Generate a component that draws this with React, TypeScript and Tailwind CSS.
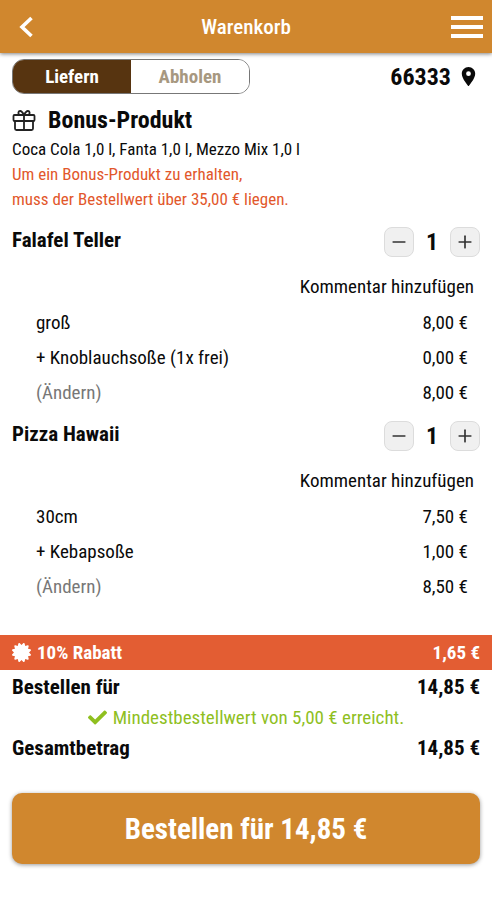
import { useState } from "react";
import { FaCertificate } from "react-icons/fa6";
import { FaCheck } from "react-icons/fa";
import { MdLocationOn } from "react-icons/md";
import { Minus, Plus } from "lucide-react";

type Option = { label: string; price: string };
type Item = { name: string; options: Option[]; total: string };

const items: Item[] = [
  {
    name: "Falafel Teller",
    options: [
      { label: "groß", price: "8,00 €" },
      { label: "+ Knoblauchsoße (1x frei)", price: "0,00 €" },
    ],
    total: "8,00 €",
  },
  {
    name: "Pizza Hawaii",
    options: [
      { label: "30cm", price: "7,50 €" },
      { label: "+ Kebapsoße", price: "1,00 €" },
    ],
    total: "8,50 €",
  },
];

function GiftIcon() {
  return (
    <svg viewBox="0 0 24 22" className="h-[22px] w-6" fill="none" stroke="#222" strokeWidth="1.8" strokeLinejoin="round" aria-hidden="true">
      <rect x="1.500" y="6" width="21" height="6" rx="1" />
      <path d="M3 12v7.500a1.500 1.500 0 0 0 1.500 1.500h15a1.500 1.500 0 0 0 1.500-1.500V12M12 6v15" />
      <path d="M12 6C10.500 3 9.500 1.800 8 2 5.800 2.400 6 5 7.500 6M12 6c1.500-3 2.500-4.200 4-4 2.200.4 2 3 .5 4" />
    </svg>
  );
}

function Stepper() {
  const [count, setCount] = useState(1);
  const button =
    "flex h-[30px] w-[30px] items-center justify-center rounded-lg border border-[#dcdcdc] bg-[#f0f0f0] text-[#333]";
  return (
    <div className="flex items-center">
      <button type="button" aria-label="Weniger" className={button} onClick={() => setCount(Math.max(0, count - 1))}>
        <Minus size={20} strokeWidth={2} />
      </button>
      <span className="w-9 text-center text-2xl leading-6 font-bold">{count}</span>
      <button type="button" aria-label="Mehr" className={button} onClick={() => setCount(count + 1)}>
        <Plus size={20} strokeWidth={2} />
      </button>
    </div>
  );
}

function CartItem({ item }: { item: Item }) {
  return (
    <section className="pt-1 pb-[7px]">
      <div className="flex h-[30px] justify-between px-3">
        <h2 className="text-[21px] leading-[26px] font-bold">{item.name}</h2>
        <Stepper />
      </div>
      <div className="mt-3 flex h-9 items-center justify-end pr-[18px]">
        <button type="button">Kommentar hinzufügen</button>
      </div>
      <table className="w-full">
        <tbody>
          {item.options.map((option) => (
            <tr key={option.label} className="h-[35px]">
              <td className="p-0 pl-9">{option.label}</td>
              <td className="p-0 pr-6 text-right">{option.price}</td>
            </tr>
          ))}
          <tr className="h-[35px]">
            <td className="p-0 pl-9 text-[#777]">
              <button type="button">(Ändern)</button>
            </td>
            <td className="p-0 pr-6 text-right">{item.total}</td>
          </tr>
        </tbody>
      </table>
    </section>
  );
}

export default function App() {
  const [mode, setMode] = useState("liefern");
  const tab = "flex-1 text-center";
  const active = "bg-[#573410] text-white";
  const idle = "bg-white text-[#a79880]";
  return (
    <div className="min-h-screen bg-white font-['Roboto_Condensed',Roboto,sans-serif] text-[19px] leading-6 text-[#0a0a0a]">
      <header className="grid h-[53px] grid-cols-[1fr_auto_1fr] items-center bg-[#d0872e] pr-2 pl-4 text-white shadow-[0_1px_4px_rgba(0,0,0,0.5)]">
        <button type="button" aria-label="Zurück" className="justify-self-start">
          <svg viewBox="0 0 20 24" className="h-6 w-5" fill="none" stroke="currentColor" strokeWidth="3.600" aria-hidden="true">
            <path d="M15.500 3 6 12l9.500 9" />
          </svg>
        </button>
        <h1 className="pr-2 text-[21px] font-medium">Warenkorb</h1>
        <button type="button" aria-label="Menü" className="justify-self-end">
          <svg viewBox="0 0 34 24" className="h-6 w-[34px]" fill="currentColor" aria-hidden="true">
            <path d="M1 1h32v4H1zM1 10h32v4H1zM1 19h32v4H1z" />
          </svg>
        </button>
      </header>

      <main>
        <div className="flex items-center justify-between px-3 pt-[6px]">
          <div className="flex h-[35px] w-[238px] overflow-hidden rounded-xl border border-[#777] text-[19px] font-bold">
            <button type="button" className={`${tab} ${mode === "liefern" ? active : idle}`} onClick={() => setMode("liefern")}>
              Liefern
            </button>
            <button type="button" className={`${tab} ${mode === "abholen" ? active : idle}`} onClick={() => setMode("abholen")}>
              Abholen
            </button>
          </div>
          <button type="button" className="flex items-center gap-[6px] text-2xl leading-6 font-bold">
            66333
            <MdLocationOn size={23} />
          </button>
        </div>

        <section className="px-3 pt-2 pb-[11px]">
          <h2 className="flex h-[35px] items-center gap-3 text-2xl leading-6 font-bold">
            <GiftIcon />
            Bonus-Produkt
          </h2>
          <p className="text-[17px] leading-[25px]">Coca Cola 1,0 l, Fanta 1,0 l, Mezzo Mix 1,0 l</p>
          <p className="text-[17px] leading-[25px] text-[#e2572b]">
            Um ein Bonus-Produkt zu erhalten,
            <br />
            muss der Bestellwert über 35,00 € liegen.
          </p>
        </section>

        {items.map((item) => (
          <CartItem key={item.name} item={item} />
        ))}

        <section className="mt-6 text-[21px] font-bold">
          <div className="flex h-[35px] items-center justify-between bg-[#e35d33] px-3 text-[19px] text-white">
            <span className="flex items-center gap-[6px]">
              <FaCertificate size={19} />
              10% Rabatt
            </span>
            <span>1,65 €</span>
          </div>
          <div className="flex h-[33px] items-center justify-between px-3">
            <span>Bestellen für</span>
            <span>14,85 €</span>
          </div>
          <p className="flex h-[29px] items-center justify-center gap-[6px] text-[19px] font-normal text-[#8fbf1f]">
            <FaCheck size={19} />
            Mindestbestellwert von 5,00 € erreicht.
          </p>
          <div className="flex h-8 items-center justify-between px-3">
            <span>Gesamtbetrag</span>
            <span>14,85 €</span>
          </div>
        </section>

        <div className="px-3 pt-[29px] pb-9">
          <button type="button" className="h-[71px] w-full rounded-[10px] bg-[#d0872e] text-[29px] font-bold text-white shadow-[0_1px_4px_rgba(0,0,0,0.4)]">
            Bestellen für 14,85 €
          </button>
        </div>
      </main>
    </div>
  );
}
